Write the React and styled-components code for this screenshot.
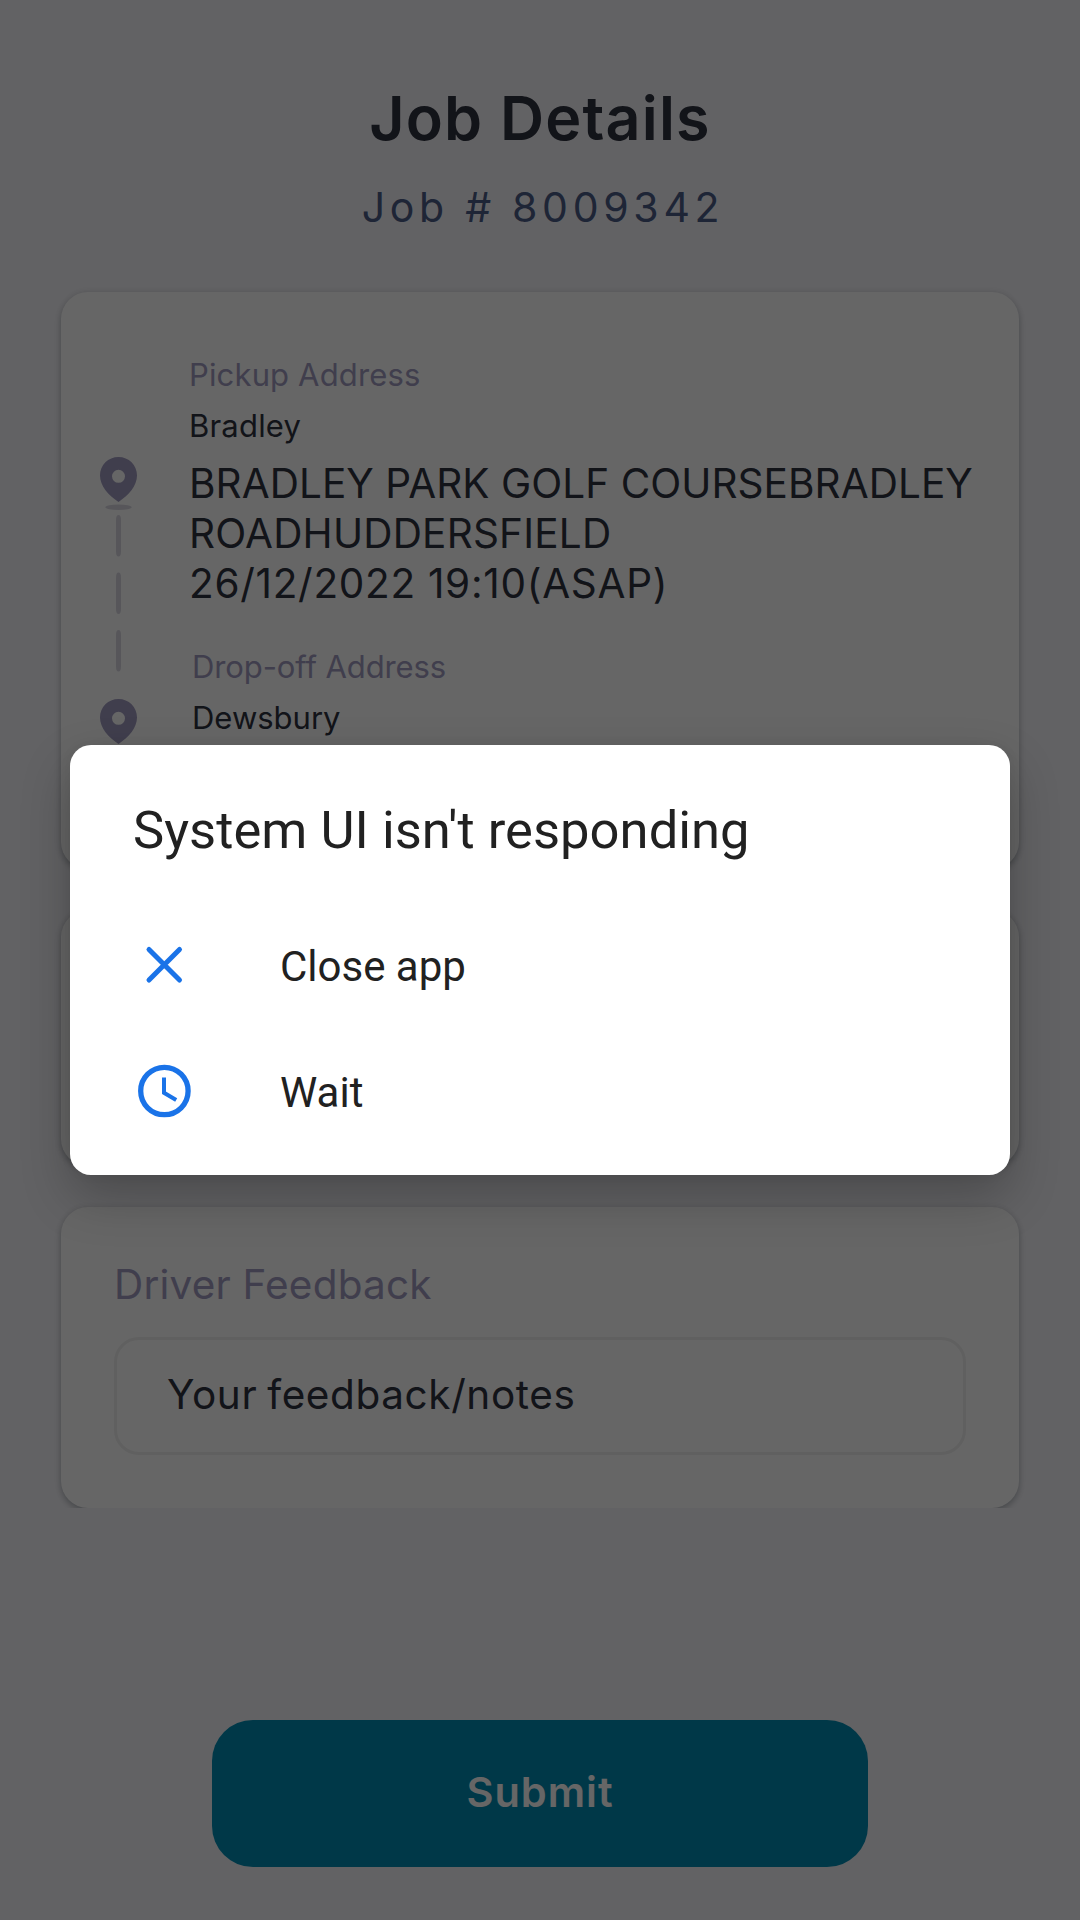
import React from "react";
import styled, { createGlobalStyle } from "styled-components";

const GlobalStyle = createGlobalStyle`
  * { box-sizing: border-box; }
  body { margin: 0; background: #626264; }
`;

const Screen = styled.main`
  position: relative;
  display: flex;
  flex-direction: column;
  width: 1080px;
  height: 1920px;
  overflow: hidden;
  background: #f5f5fa;
  color: #2f323f;
  font-family: Inter, "Liberation Sans", sans-serif;
`;

const Header = styled.header`
  display: flex;
  flex-direction: column;
  align-items: center;
  gap: 28px;
  padding-top: 82px;
`;

const Title = styled.h1`
  margin: 0;
  font-size: 61px;
  font-weight: 600;
  line-height: 72px;
  letter-spacing: 1.2px;
`;

const JobNumber = styled.p`
  margin: 0;
  padding-left: 6px;
  font-size: 41px;
  line-height: 50px;
  letter-spacing: 4.7px;
  color: #4b5c87;
`;

const CardList = styled.div`
  display: flex;
  flex-direction: column;
  gap: 41px;
  padding: 0 61px;
  margin-top: 60px;
  clip-path: inset(-20px 0 0 0);
`;

const Card = styled.section`
  display: flex;
  height: ${(p) => p.$height}px;
  border-radius: 27px;
  background: #fff;
  box-shadow: 0 3px 6px rgba(0, 20, 30, 0.24), 0 0 8px rgba(0, 20, 30, 0.07);
`;

const RouteCard = styled(Card)`
  padding: 64px 0 0 39px;
`;

const RouteRail = styled.svg`
  flex: none;
  width: 37px;
  height: 400px;
  margin-top: 101px;
`;

const Stops = styled.div`
  display: flex;
  flex-direction: column;
  gap: 39px;
  margin-left: 52px;
`;

const Stop = styled.div`
  display: flex;
  flex-direction: column;
  padding-left: ${(p) => p.$indent || 0}px;
`;

const Label = styled.span`
  font-size: 31px;
  line-height: 38px;
  letter-spacing: ${(p) => p.$tracking}px;
  color: #a09bc0;
`;

const Town = styled.span`
  margin-top: 13px;
  font-size: 31px;
  line-height: 38px;
  letter-spacing: ${(p) => p.$tracking || 0}px;
`;

const Address = styled.div`
  display: flex;
  flex-direction: column;
  margin-top: 14px;
  font-size: 40.5px;
  line-height: 50px;
  white-space: nowrap;
`;

const Line = styled.span`
  letter-spacing: ${(p) => p.$tracking || 0}px;
`;

const FeedbackCard = styled(Card)`
  flex-direction: column;
  padding: 53px 53px 0;
`;

const FeedbackLabel = styled.label`
  font-size: 40.5px;
  line-height: 50px;
  letter-spacing: 0.2px;
  color: #a09bc0;
`;

const FeedbackField = styled.div`
  display: flex;
  align-items: center;
  height: 118px;
  margin-top: 27px;
  padding: 0 50px 2px;
  border: 3px solid #f0f0f0;
  border-radius: 25px;
  font-size: 40.5px;
  line-height: 50px;
  letter-spacing: 0.6px;
  word-spacing: -2px;
`;

const SubmitButton = styled.button`
  align-self: center;
  width: 656px;
  height: 147px;
  margin-top: 212px;
  padding: 0 0 3px;
  border: 0;
  border-radius: 41px;
  background: #008cb4;
  color: #fff;
  font: 600 41.5px/50px Inter, "Liberation Sans", sans-serif;
  letter-spacing: 1px;
`;

const Scrim = styled.div`
  position: absolute;
  inset: 0;
  display: flex;
  justify-content: center;
  align-items: center;
  background: rgba(0, 0, 0, 0.6);
`;

const Dialog = styled.div`
  width: 940px;
  height: 430px;
  padding: 54px 62px 0 63px;
  border-radius: 21px;
  background: #fff;
  box-shadow: 0 22px 50px rgba(0, 0, 0, 0.24), 0 0 12px rgba(0, 0, 0, 0.06);
  color: #212121;
  font-family: Roboto, "Liberation Sans", sans-serif;
`;

const DialogTitle = styled.h2`
  margin: 0 0 41px;
  font-size: 52.5px;
  font-weight: 400;
  line-height: 62px;
  letter-spacing: 0.04px;
`;

const Action = styled.div`
  display: flex;
  align-items: center;
  gap: 84px;
  height: 126px;
  font-size: 42px;
  line-height: 50px;
`;

const ActionText = styled.span`
  padding-top: 4px;
`;

const ActionIcon = styled.svg`
  flex: none;
  width: 64px;
  height: 64px;
  margin: -1px 0 0 -1px;
  fill: none;
  stroke: #1a73e8;
`;

function Pin({ y }) {
  return (
    <path
      transform={`translate(0 ${y})`}
      fill="#a09bc0"
      fillRule="evenodd"
      d="M18.5 0C8.3 0 0 8 0 18.6C0 29 8.500 38.500 18.500 45C28.500 38.500 37 29 37 18.600C37 8 28.700 0 18.500 0ZM18.500 12.800A6.500 6.500 0 1 1 18.500 25.800A6.500 6.500 0 1 1 18.500 12.800Z"
    />
  );
}

export default function App() {
  return (
    <Screen>
      <GlobalStyle />
      <Header>
        <Title>Job Details</Title>
        <JobNumber>Job # 8009342</JobNumber>
      </Header>
      <CardList>
        <RouteCard $height={577}>
          <RouteRail viewBox="0 0 37 400">
            <Pin y={0} />
            <ellipse cx="18.5" cy="50.3" rx="13.2" ry="2.8" fill="#dad8e2" />
            {[58, 115.5, 173].map((y) => (
              <rect key={y} x="16" y={y} width="5" height="41.500" rx="2.5" ry="5" fill="#dad8e2" />
            ))}
            <Pin y={242} />
          </RouteRail>
          <Stops>
            <Stop>
              <Label $tracking={0.15}>Pickup Address</Label>
              <Town $tracking={0.2}>Bradley</Town>
              <Address>
                <Line $tracking={0.05}>BRADLEY PARK GOLF COURSEBRADLEY</Line>
                <Line $tracking={0.2}>ROADHUDDERSFIELD</Line>
                <Line $tracking={0.7}>26/12/2022 19:10(ASAP)</Line>
              </Address>
            </Stop>
            <Stop $indent={3}>
              <Label $tracking={-0.1}>Drop-off Address</Label>
              <Town>Dewsbury</Town>
            </Stop>
          </Stops>
        </RouteCard>
        <Card $height={256} />
        <FeedbackCard $height={301}>
          <FeedbackLabel>Driver Feedback</FeedbackLabel>
          <FeedbackField>Your feedback/notes</FeedbackField>
        </FeedbackCard>
      </CardList>
      <SubmitButton>Submit</SubmitButton>
      <Scrim>
        <Dialog role="dialog">
          <DialogTitle>System UI isn't responding</DialogTitle>
          <Action>
            <ActionIcon viewBox="0 0 64 64">
              <path d="M17 16.500L47.500 47M47.500 16.500L17 47" strokeWidth="5" strokeLinecap="round" />
            </ActionIcon>
            <ActionText>Close app</ActionText>
          </Action>
          <Action>
            <ActionIcon viewBox="0 0 64 64">
              <circle cx="32.400" cy="32" r="23.700" strokeWidth="5.300" />
              <path d="M32 18.500V33.800L44.200 41" strokeWidth="4" />
            </ActionIcon>
            <ActionText>Wait</ActionText>
          </Action>
        </Dialog>
      </Scrim>
    </Screen>
  );
}
